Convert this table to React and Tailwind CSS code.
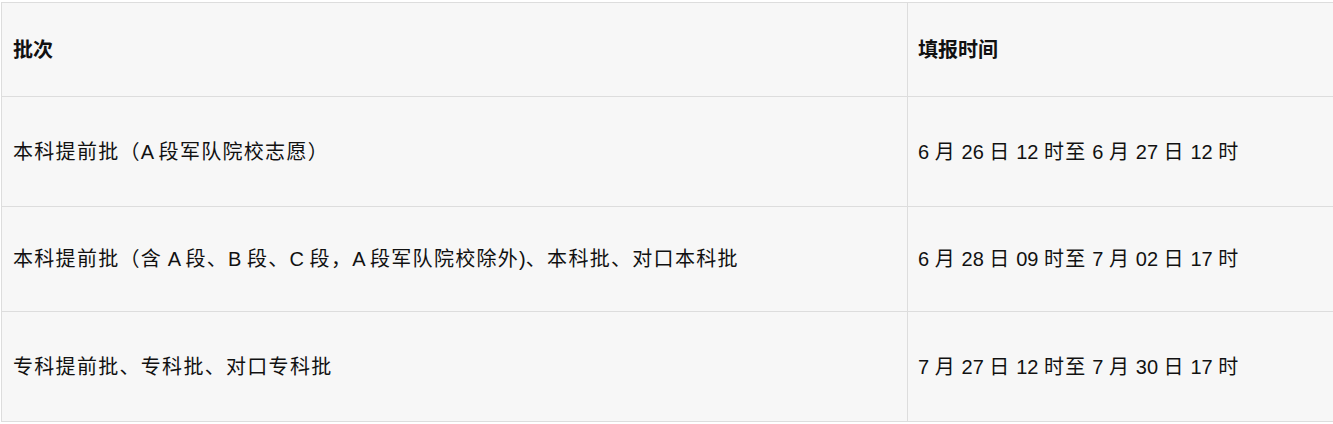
import React from 'react';

const rows = [
    ['本科提前批（A 段军队院校志愿）', '6 月 26 日 12 时至 6 月 27 日 12 时', 'h-[110px]'],
    ['本科提前批（含 A 段、B 段、C 段，A 段军队院校除外)、本科批、对口本科批', '6 月 28 日 09 时至 7 月 02 日 17 时', 'h-[105px]'],
    ['专科提前批、专科批、对口专科批', '7 月 27 日 12 时至 7 月 30 日 17 时', 'h-[110px]'],
];

// 中文字符比拉丁字符略宽一点
const Cjk = ({ text }) =>
    text.split(/([\u3000-\u303f\u4e00-\u9fff\uff00-\uffef]+)/).map((part, i) =>
        i % 2 === 1 ? (
            <span key={i} className="tracking-[1.3px]">{part}</span>
        ) : (
            <React.Fragment key={i}>{part}</React.Fragment>
        )
    );

const App = () => {
    return (
        <div className="min-h-screen bg-white pt-[2px] pl-[1px] overflow-hidden">
            <table
                className="w-[1340px] border-collapse bg-[#f7f7f7] text-[20px] text-[#111111]"
                style={{ fontFamily: '"Liberation Sans", "Noto Sans CJK SC", sans-serif' }}
            >
                <thead>
                    <tr className="h-[94px]">
                        <th className="w-[906px] border border-[#dddddd] px-[11px] text-left font-bold">批次</th>
                        <th className="border border-[#dddddd] px-[10px] text-left font-bold">填报时间</th>
                    </tr>
                </thead>
                <tbody>
                    {rows.map(([batch, time, h]) => (
                        <tr key={batch} className={h}>
                            <td className="border border-[#dddddd] px-[11px]"><Cjk text={batch} /></td>
                            <td className="border border-[#dddddd] px-[10px]"><Cjk text={time} /></td>
                        </tr>
                    ))}
                </tbody>
            </table>
        </div>
    );
};

export default App;
